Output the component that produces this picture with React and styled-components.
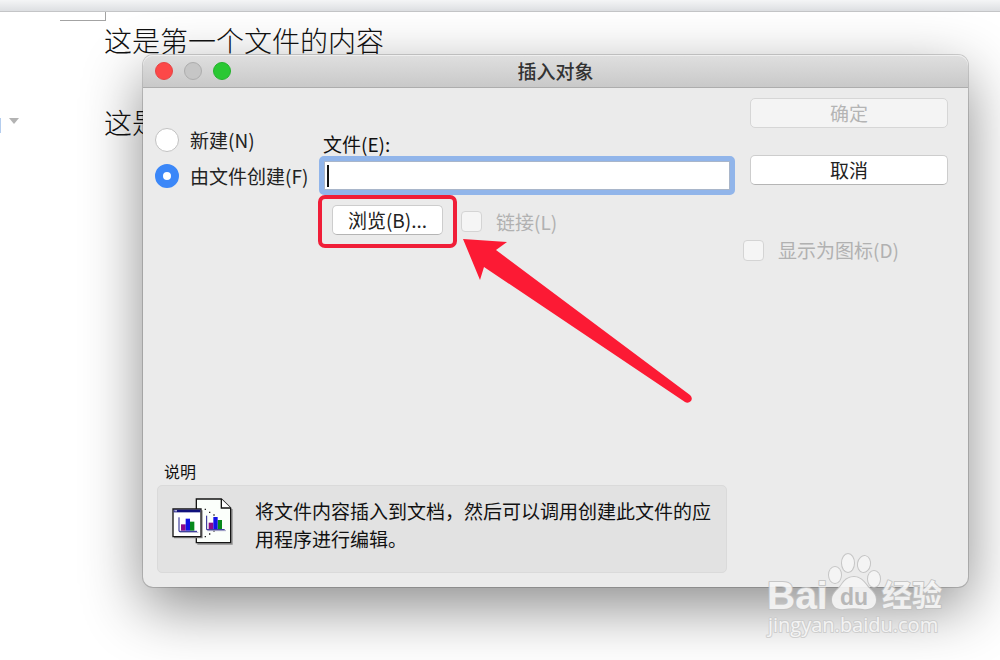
import React, { useState } from "react";
import styled, { createGlobalStyle, css } from "styled-components";

const Global = createGlobalStyle`
  *, *::before, *::after { box-sizing: border-box; }
  body {
    margin: 0;
    background: #fff;
    color: #111;
    font-family: "Noto Sans CJK SC", sans-serif;
    font-size: 19px;
    line-height: 24px;
  }
  input, button { font: inherit; }
`;

const Page = styled.main`
  position: relative;
  min-height: 100vh;
  overflow: hidden;
  background: #fff;
`;

const Toolbar = styled.div`
  height: 12px;
  background: linear-gradient(#f4f5f6, #dddfe2);
  border-bottom: 1px solid #c4c5c7;
`;

const Sheet = styled.div`
  display: grid;
  grid-template-columns: 104px 1fr;
`;

const Gutter = styled.div`
  display: flex;
  flex-direction: column;
  gap: 97px;
`;

const MarginCorner = styled.div`
  width: 46px;
  height: 9px;
  margin-left: 60px;
  border: solid #a3a3a3;
  border-width: 0 1px 1px 0;
`;

const Marker = styled.div`
  display: flex;
  gap: 8px;
`;

const MarkerEdge = styled.span`
  width: 1px;
  height: 15px;
  background: #b4cdee;
`;

const MarkerArrow = styled.span`
  width: 10px;
  height: 6px;
  border: solid transparent;
  border-width: 6px 5px 0;
  border-top-color: #b3b3b3;
`;

const Text = styled.article`
  display: flex;
  flex-direction: column;
  gap: 41px;
  padding-top: 8px;
`;

const Paragraph = styled.p`
  margin: 0;
  font-size: 28px;
  font-weight: 300;
  line-height: 41px;
`;

const Dialog = styled.section`
  position: absolute;
  top: 55px;
  left: 143px;
  right: 32px;
  background: #ebebeb;
  border-radius: 10px;
  box-shadow: 0 0 0 1px rgba(0, 0, 0, 0.16), 0 20px 60px rgba(0, 0, 0, 0.46);
`;

const TitleBar = styled.header`
  display: grid;
  grid-template-columns: 1fr auto 1fr;
  align-items: center;
  height: 33px;
  padding: 0 12px;
  border-radius: 10px 10px 0 0;
  border-bottom: 1px solid #adadad;
  background: linear-gradient(#dfdfdf, #c9c9c9);
  box-shadow: inset 0 1px #efefef;
`;

const Lights = styled.div`
  display: flex;
  gap: 11px;
`;

const Light = styled.button`
  width: 18px;
  height: 18px;
  padding: 0;
  border: 1px solid ${(p) => p.$edge};
  border-radius: 50%;
  background: ${(p) => p.$fill};
`;

const Title = styled.h1`
  margin: 0;
  color: #333;
  font-size: 19px;
  font-weight: 500;
  line-height: 24px;
`;

const Body = styled.form`
  padding: 0 20px 14px 12px;
`;

const Columns = styled.div`
  display: grid;
  grid-template-columns: 164px 1fr 205px;
`;

const Modes = styled.div`
  display: flex;
  flex-direction: column;
  gap: 12px;
  padding-top: 40px;
`;

const Option = styled.label`
  display: flex;
  align-items: center;
  gap: ${(p) => p.$gap}px;
  color: ${(p) => (p.$muted ? "#b1b1b1" : "#222")};
  white-space: nowrap;
`;

const Radio = styled.input`
  appearance: none;
  flex: none;
  width: 24px;
  height: 24px;
  margin: 0;
  border: 1px solid #c2c2c2;
  border-radius: 50%;
  background: #fff;
  &:checked {
    border: 8px solid #3b87f8;
  }
`;

const Checkbox = styled.input`
  appearance: none;
  flex: none;
  width: 21px;
  height: 21px;
  margin: 0;
  border: 1px solid #d4d4d4;
  border-radius: 4px;
  background: #f5f5f5;
`;

const FileColumn = styled.div`
  padding: 44px 8px 0 0;
`;

const FieldLabel = styled.label`
  display: block;
  padding-left: 4px;
`;

const Field = styled.div`
  display: flex;
  align-items: center;
  height: 39px;
  padding-left: 3px;
  border: 5px solid #91b5ea;
  border-radius: 5px;
  background: #fff;
  box-shadow: inset 0 0 0 1px #a9b6ca;
`;

const Caret = styled.span`
  width: 2px;
  height: 22px;
  background: #111;
`;

const FieldInput = styled.input`
  flex: 1;
  min-width: 0;
  padding: 0 4px;
  border: 0;
  outline: 0;
  background: transparent;
`;

const BrowseRow = styled.div`
  display: flex;
  align-items: center;
  gap: 4px;
`;

const Highlight = styled.div`
  flex: none;
  margin-left: -1px;
  padding: 6px 10px 9px;
  border: 4px solid #f01e38;
  border-radius: 7px;
`;

const Button = styled.button`
  display: block;
  width: ${(p) => p.$width};
  height: 30px;
  padding: 0;
  border: 1px solid #cdcdcd;
  border-bottom-color: #b5b5b5;
  border-radius: 5px;
  background: #fff;
  color: #222;
  line-height: 26px;
  ${(p) =>
    p.disabled &&
    css`
      border-color: #d6d6d6;
      background: #f4f4f4;
      color: #b4b4b4;
    `}
`;

const Side = styled.div`
  display: flex;
  flex-direction: column;
  gap: 53px;
  padding-top: 10px;
`;

const Actions = styled.div`
  display: flex;
  flex-direction: column;
  gap: 27px;
  padding-left: 7px;
`;

const Notes = styled.section`
  width: 570px;
  max-width: 100%;
  margin: 199px 0 0 2px;
`;

const NotesTitle = styled.h2`
  margin: 0 0 4px;
  padding-left: 7px;
  font-size: 16px;
  font-weight: 400;
  line-height: 20px;
`;

const NotesBox = styled.div`
  display: flex;
  gap: 22px;
  padding: 11px 12px 19px 13px;
  border: 1px solid #dadada;
  border-radius: 5px;
  background: #e2e2e2;
`;

const NotesText = styled.p`
  flex: 1;
  margin: 0;
  line-height: 28px;
`;

const NotesIcon = styled.svg`
  flex: none;
  width: 62px;
  height: 48px;
`;

const Pointer = styled.svg`
  position: absolute;
  top: 184px;
  left: 320px;
  width: 230px;
  height: 166px;
  pointer-events: none;
`;

const Watermark = styled.svg`
  position: absolute;
  right: 50px;
  bottom: 16px;
  width: 186px;
  height: 94px;
  pointer-events: none;
`;

function Chart({ x, y }) {
  return (
    <g transform={`translate(${x} ${y})`}>
      <path d="M3 45h56" stroke="#a9a9c8" strokeWidth="3" />
      <path d="M7 21h14v19H7z" fill="#8b0a8b" />
      <path d="M34 13h13v27H34z" fill="#078a1c" />
      <path d="M21 4h13v36H21z" fill="#1212e6" />
      <path d="M1 0v42h54" fill="none" stroke="#1d1d8c" strokeWidth="3" />
    </g>
  );
}

function FileIcon() {
  return (
    <NotesIcon viewBox="33 20 186 144" aria-hidden="true">
      <path d="M112 161h104V56" fill="none" stroke="#8d8d8d" strokeWidth="4" />
      <path d="M109 26h75l28 27v104H109z" fill="#fbfffb" stroke="#151515" strokeWidth="4" />
      <path d="M184 26v27h28" fill="#fff" stroke="#151515" strokeWidth="4" />
      <path d="M42 142h84V60" fill="none" stroke="#8d8d8d" strokeWidth="4" />
      <path d="M39 56h84v83H39z" fill="#fff" stroke="#151515" strokeWidth="4" />
      <path d="M41 58h80v8H41z" fill="#10107c" />
      <path d="M43 60h8v3h-8z" fill="#fff" />
      <path
        d="M134 55h4v4h-4zM147 64h4v4h-4zM160 72h4v4h-4zM160 120h4v4h-4zM147 129h4v4h-4zM134 137h4v4h-4z"
        fill="#222"
      />
      <Chart x={56} y={81} />
      <Chart x={139} y={76} />
    </NotesIcon>
  );
}

function BaiduMark() {
  return (
    <Watermark viewBox="764 550 186 94" role="img" aria-label="Baidu 经验">
      <g fill="#f6f6f6" stroke="#c2c2c2" strokeWidth="2" strokeLinejoin="round" opacity="0.9" style={{ paintOrder: "stroke" }}>
        <text x="767" y="609" fontFamily="Liberation Sans, sans-serif" fontWeight="700" fontSize="39">
          Bai
        </text>
        <ellipse cx="835" cy="575" rx="6" ry="8" />
        <ellipse cx="848" cy="563" rx="6" ry="9" />
        <ellipse cx="864" cy="564" rx="6" ry="8" transform="rotate(10 864 564)" />
        <ellipse cx="874" cy="579" rx="6" ry="8" />
        <path d="M854 577c-9 0-11 7-15 11-4 4-7 7-7 12 0 7 6 10 12 9 7-1 13-1 19 0 7 1 13-2 13-9 0-5-3-8-7-12-4-4-7-11-15-11z" />
        <text x="882" y="606" fontFamily="Noto Sans CJK SC, sans-serif" fontWeight="700" fontSize="30">
          经验
        </text>
        <text x="768" y="632" stroke="#cccccc" fontFamily="Open Sans, sans-serif" fontSize="20">
          jingyan.baidu.com
        </text>
      </g>
      <text x="840" y="605" fill="#b8b8b8" fontFamily="Liberation Sans, sans-serif" fontWeight="700" fontSize="23">
        du
      </text>
    </Watermark>
  );
}

export default function App() {
  const [mode, setMode] = useState("file");
  const [path, setPath] = useState("");

  return (
    <Page>
      <Global />
      <Toolbar />
      <Sheet>
        <Gutter>
          <MarginCorner />
          <Marker>
            <MarkerEdge />
            <MarkerArrow />
          </Marker>
        </Gutter>
        <Text>
          <Paragraph>这是第一个文件的内容</Paragraph>
          <Paragraph>这是</Paragraph>
        </Text>
      </Sheet>

      <Dialog role="dialog" aria-labelledby="dialog-title">
        <TitleBar>
          <Lights>
            <Light type="button" aria-label="关闭" $fill="#fc4848" $edge="#e64444" />
            <Light type="button" aria-label="最小化" $fill="#c6c6c6" $edge="#adadad" />
            <Light type="button" aria-label="缩放" $fill="#2ac833" $edge="#24b32c" />
          </Lights>
          <Title id="dialog-title">插入对象</Title>
        </TitleBar>

        <Body onSubmit={(e) => e.preventDefault()}>
          <Columns>
            <Modes role="radiogroup">
              <Option $gap={11}>
                <Radio type="radio" name="mode" checked={mode === "new"} onChange={() => setMode("new")} />
                新建(N)
              </Option>
              <Option $gap={11}>
                <Radio type="radio" name="mode" checked={mode === "file"} onChange={() => setMode("file")} />
                由文件创建(F)
              </Option>
            </Modes>

            <FileColumn>
              <FieldLabel htmlFor="file-path">文件(E):</FieldLabel>
              <Field>
                <Caret />
                <FieldInput id="file-path" type="text" value={path} onChange={(e) => setPath(e.target.value)} />
              </Field>
              <BrowseRow>
                <Highlight>
                  <Button type="button" $width="111px">浏览(B)...</Button>
                </Highlight>
                <Option $gap={14} $muted>
                  <Checkbox type="checkbox" disabled />
                  链接(L)
                </Option>
              </BrowseRow>
            </FileColumn>

            <Side>
              <Actions>
                <Button type="submit" $width="100%" disabled>确定</Button>
                <Button type="button" $width="100%">取消</Button>
              </Actions>
              <Option $gap={14} $muted>
                <Checkbox type="checkbox" disabled />
                显示为图标(D)
              </Option>
            </Side>
          </Columns>

          <Notes>
            <NotesTitle>说明</NotesTitle>
            <NotesBox>
              <FileIcon />
              <NotesText>将文件内容插入到文档，然后可以调用创建此文件的应用程序进行编辑。</NotesText>
            </NotesBox>
          </Notes>
        </Body>

        <Pointer viewBox="463 239 230 166" aria-hidden="true">
          <path
            d="M463 239L507 242L496 250L690 395Q693 398 691 401Q688 404 685 402L484 267L480 280Z"
            fill="#fc1a34"
          />
        </Pointer>
      </Dialog>

      <BaiduMark />
    </Page>
  );
}
